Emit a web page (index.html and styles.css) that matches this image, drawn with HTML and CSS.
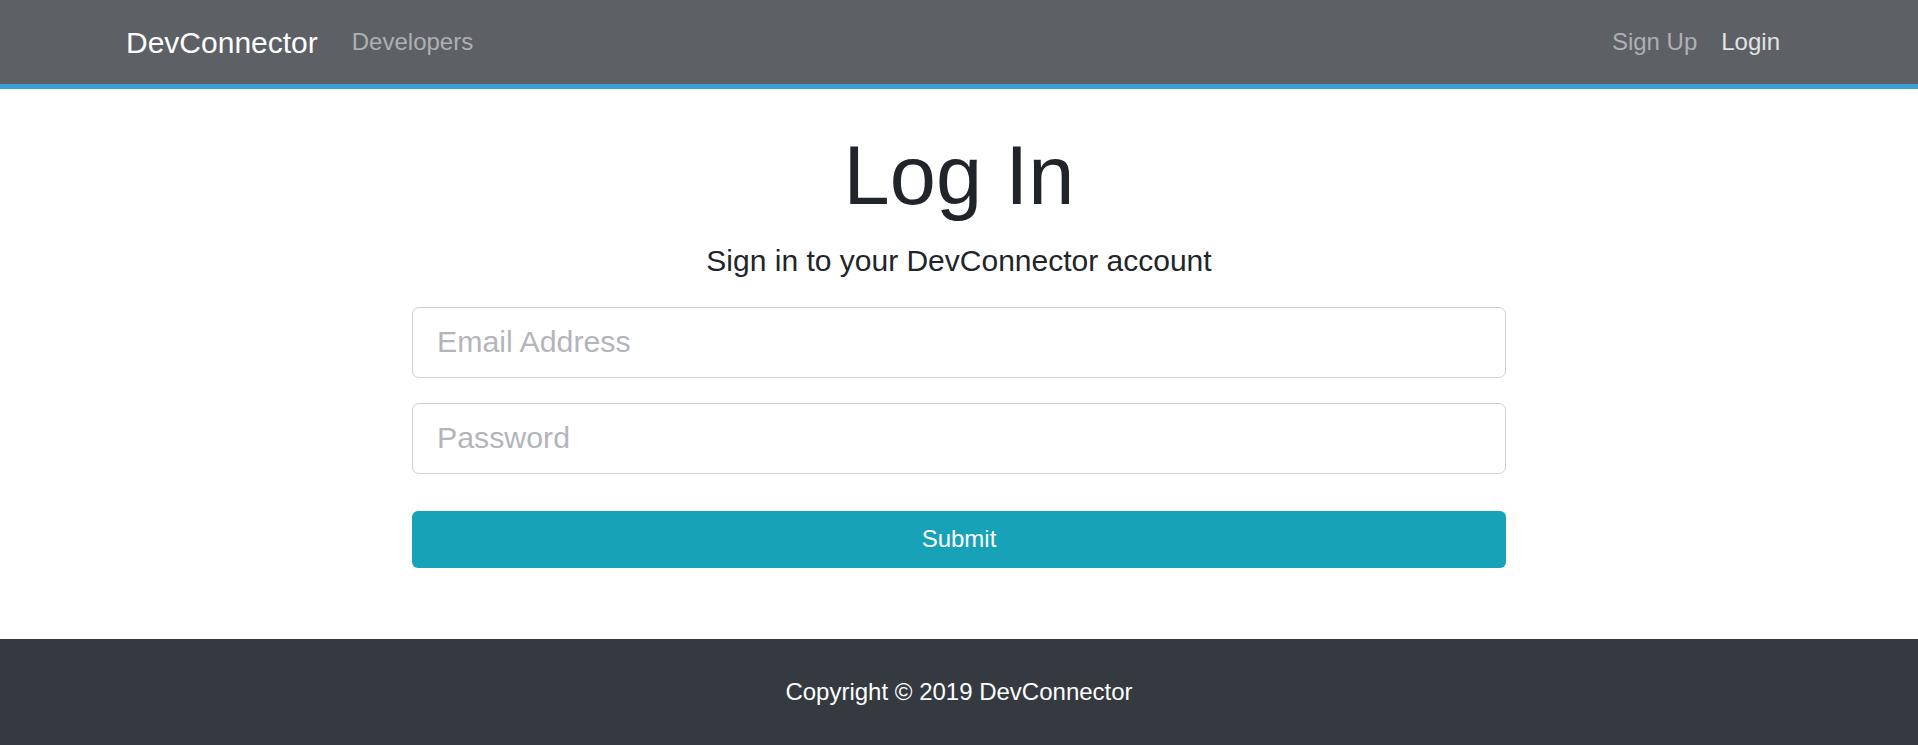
FILE: index.html
```html
<!DOCTYPE html>
<html lang="en">
<head>
<meta charset="utf-8">
<title>DevConnector - Log In</title>
<link rel="stylesheet" href="styles.css">
</head>
<body>
<nav class="navbar">
  <div class="nav-inner">
    <div class="nav-left">
      <a class="brand" href="#">DevConnector</a>
      <a class="nav-link" href="#">Developers</a>
    </div>
    <div class="nav-right">
      <a class="nav-link" href="#">Sign Up</a>
      <a class="nav-link active" href="#">Login</a>
    </div>
  </div>
</nav>
<main class="login">
  <h1 class="title">Log In</h1>
  <p class="lead">Sign in to your DevConnector account</p>
  <form class="form">
    <input class="field" type="email" placeholder="Email Address">
    <input class="field" type="password" placeholder="Password">
    <button class="submit" type="button">Submit</button>
  </form>
</main>
<footer class="footer">Copyright &copy; 2019 DevConnector</footer>
</body>
</html>
```
FILE: styles.css
```css
* { box-sizing: border-box; }
html, body { margin: 0; padding: 0; }
body {
  font-family: "Liberation Sans", Arial, sans-serif;
  color: #212529;
  background: #fff;
  min-height: 745px;
  display: flex;
  flex-direction: column;
}
a { text-decoration: none; }

.navbar {
  background: #5d6166;
  border-bottom: 5px solid #3ba2d6;
  height: 89px;
}
.nav-inner {
  width: 1666px;
  margin: 0 auto;
  height: 84px;
  display: flex;
  align-items: center;
  justify-content: space-between;
}
.nav-left, .nav-right { display: flex; align-items: center; }
.brand {
  color: #fff;
  font-size: 30px;
  margin-right: 22px;
  line-height: 1.5;
}
.nav-link {
  color: #aeb0b2;
  font-size: 24px;
  padding: 0 12px;
  line-height: 1.5;
}
.nav-link.active { color: #e2e3e4; }

.login {
  flex: 1;
  width: 1094px;
  margin: 0 auto;
  padding: 37px 0 69px;
  text-align: center;
}
.title {
  font-size: 83px;
  font-weight: 400;
  line-height: 1.2;
  margin: 0 0 12px;
}
.lead {
  font-size: 30px;
  line-height: 1.5;
  margin: 0 0 24px;
}
.form { display: flex; flex-direction: column; }
.field {
  height: 71px;
  width: 100%;
  border: 1px solid #cdd1d6;
  border-radius: 7px;
  padding: 0 24px;
  font-family: "Liberation Sans", Arial, sans-serif;
  font-size: 30.3px;
  color: #495057;
  margin-bottom: 25px;
  outline: none;
}
.field::placeholder { color: #b3b5b9; }
.submit {
  margin-top: 12px;
  height: 57px;
  width: 100%;
  border: none;
  border-radius: 6px;
  background: #17a2b8;
  color: #fff;
  font-family: "Liberation Sans", Arial, sans-serif;
  font-size: 24px;
}

.footer {
  background: #343a40;
  color: #fff;
  height: 106px;
  display: flex;
  align-items: center;
  justify-content: center;
  font-size: 24px;
}
```
